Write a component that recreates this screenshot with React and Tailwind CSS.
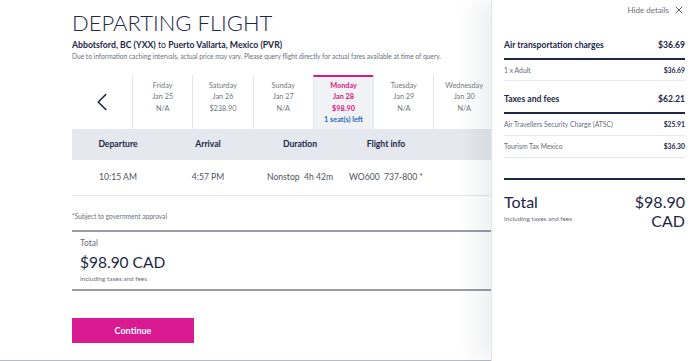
import { X, ChevronLeft, ChevronRight } from "lucide-react";

const days = [
  { day: "Friday", date: "Jan 25", price: "N/A" },
  { day: "Saturday", date: "Jan 26", price: "$238.90" },
  { day: "Sunday", date: "Jan 27", price: "N/A" },
  { day: "Monday", date: "Jan 28", price: "$98.90", seats: "1 seat(s) left", active: true },
  { day: "Tuesday", date: "Jan 29", price: "N/A" },
  { day: "Wednesday", date: "Jan 30", price: "N/A" },
  { day: "Thursday", date: "Jan 31", price: "N/A" },
];

function DayCell({ d }) {
  return (
    <div
      className={
        "w-[60.3px] shrink-0 border-l border-[#e3e5ea] flex flex-col items-center text-[7.3px] leading-[11.4px] " +
        (d.active
          ? "bg-[#f1f2f5] border-t-2 border-t-[#d9197f] text-[#d9197f] font-bold pt-[3px]"
          : "text-[#74767e] pt-[5px]")
      }
    >
      <span>{d.day}</span>
      <span>{d.date}</span>
      <span>{d.price}</span>
      {d.seats && <span className="text-[#2d6db5]">{d.seats}</span>}
    </div>
  );
}

function SubRow({ label, value, h }) {
  return (
    <div className={"flex justify-between items-center border-b border-[#e8e9ee] text-[6.8px] " + h}>
      <span className="text-[#6b6e78]">{label}</span>
      <span className="font-bold text-[#1d2747]">{value}</span>
    </div>
  );
}

function Section({ label, value, mt }) {
  return (
    <div className={"flex justify-between pb-[7px] border-b-2 border-[#1d2747] text-[8.6px] leading-[12px] font-bold " + mt}>
      <span>{label}</span>
      <span>{value}</span>
    </div>
  );
}

export default function App() {
  return (
    <div
      className="relative w-[700px] h-[361px] overflow-hidden bg-white text-[#1d2747]"
      style={{ fontFamily: "Lato, 'Open Sans', sans-serif" }}
    >
      {/* page content */}
      <div className="w-[700px] h-[361px] border-b border-[#b9bbc3]">
        <div className="w-[560px] ml-[72px] pt-[11px]">
          <h1 className="text-[22px] leading-[24px] font-light">DEPARTING FLIGHT</h1>
          <p className="mt-[4px] text-[8.7px] leading-[12px]">
            <b>Abbotsford, BC (YXX)</b> to <b>Puerto Vallarta, Mexico (PVR)</b>
          </p>
          <p className="text-[6.6px] leading-[10px] text-[#6b6e78]">
            Due to information caching intervals, actual price may vary. Please query flight directly for actual fares available at time of query.
          </p>

          {/* date carousel */}
          <div className="mt-[14px] flex h-[54px]">
            <div className="w-[60px] shrink-0 flex items-center justify-center">
              <ChevronLeft size={30} strokeWidth={1.3} className="text-[#1d2747]" />
            </div>
            {days.map((d) => (
              <DayCell key={d.day} d={d} />
            ))}
            <div className="w-[60px] shrink-0 border-l border-[#e3e5ea] flex items-center justify-center">
              <ChevronRight size={30} strokeWidth={1.3} />
            </div>
          </div>

          {/* flight table */}
          <div className="grid grid-cols-[92px_88px_96px_76px] h-[31px] items-center bg-[#e5e8ee] text-[8.6px] font-bold text-center">
            <span>Departure</span>
            <span>Arrival</span>
            <span>Duration</span>
            <span>Flight info</span>
          </div>
          <div className="grid grid-cols-[92px_88px_96px_76px] h-[36px] items-center border-b border-[#e3e5ea] text-[8.6px] text-[#50535d] text-center">
            <span>10:15 AM</span>
            <span>4:57 PM</span>
            <span>Nonstop&nbsp; 4h 42m</span>
            <span>WO600&nbsp; 737-800 *</span>
          </div>

          <p className="mt-[16px] text-[6.6px] text-[#6b6e78] leading-[9px]">*Subject to government approval</p>
          <div className="mt-[9px] border-y-2 border-[#9a9ca6] pl-[8px] pt-[5px] pb-[6px]">
            <p className="text-[8.5px] text-[#6b6e78] leading-[12px]">Total</p>
            <p className="mt-[3px] text-[15.5px] leading-[20px]">$98.90 CAD</p>
            <p className="mt-[2px] text-[6.4px] text-[#6b6e78] leading-[9px]">Including taxes and fees</p>
          </div>

          <button className="mt-[27px] w-[122px] h-[25px] bg-[#da1a91] text-white text-[9px] font-bold">
            Continue
          </button>
        </div>
      </div>

      {/* price details drawer */}
      <aside className="absolute top-0 right-0 h-full w-[209px] bg-white border-l border-[#e3e5ea] shadow-[-14px_0_22px_rgba(30,40,70,0.07)] pl-[12px] pr-[15px]">
        <div className="flex justify-end items-center gap-[4px] h-[20px] text-[8px] text-[#6b6e78]">
          <span>Hide details</span>
          <X size={12} strokeWidth={1.5} className="text-[#1d2747]" />
        </div>

        <Section label="Air transportation charges" value="$36.69" mt="mt-[19px]" />
        <SubRow label="1 x Adult" value="$36.69" h="h-[21px]" />

        <Section label="Taxes and fees" value="$62.21" mt="mt-[12px]" />
        <SubRow label="Air Travellers Security Charge (ATSC)" value="$25.91" h="h-[22px]" />
        <SubRow label="Tourism Tax Mexico" value="$36.30" h="h-[22px]" />

        <div className="mt-[20px] border-t-2 border-[#1d2747] pt-[12px] flex justify-between">
          <div>
            <p className="text-[16px] leading-[19px]">Total</p>
            <p className="mt-[3px] text-[6.5px] leading-[9px] text-[#6b6e78]">Including taxes and fees</p>
          </div>
          <p className="text-[16px] leading-[19px] text-right">
            $98.90
            <br />
            CAD
          </p>
        </div>
      </aside>
    </div>
  );
}
